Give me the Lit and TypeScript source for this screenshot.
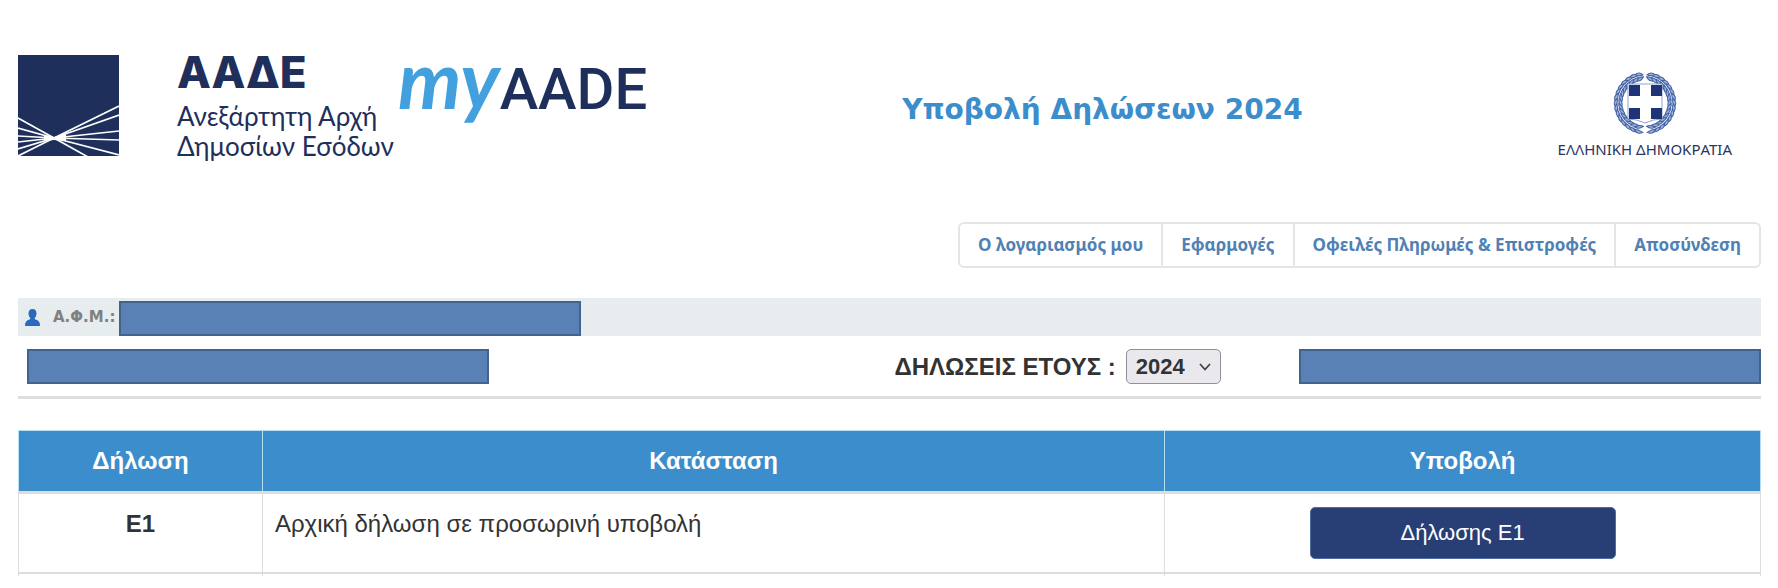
import { LitElement, html, css, svg } from "lit";
import { customElement, state } from "lit/decorators.js";

@customElement("aade-brand")
class AadeBrand extends LitElement {
  static styles = css`
    :host { display: flex; align-items: flex-start; color: #1e2f5c; }
    .mark { display: block; flex: none; }
    .name { margin-left: 58px; width: 221px; white-space: nowrap; }
    .short { font: 800 44px/34px Inter, "Noto Sans", sans-serif; }
    .long { margin-top: 12px; font: 26px/30px Lato, "Noto Sans", sans-serif; }
    .my { display: flex; align-items: baseline; font: 500 58px/46px Roboto, sans-serif; }
    .script { font: italic 700 80px/46px Lato, sans-serif; color: #43a0de; }
  `;

  render() {
    const ends = [[0, 63], [0, 73], [0, 81], [0, 87], [0, 94], [0, 101], [101, 51], [101, 60], [101, 76], [101, 85], [101, 100], [70, 102]];
    return html`
      <svg class="mark" width="101" height="101" viewBox="0 0 101 101" aria-hidden="true">
        <rect width="101" height="101" fill="#1e2f5c" />
        ${ends.map(([x, y]) => svg`<line x1="36" y1="83" x2=${x} y2=${y} stroke="#fff" stroke-width="1.7" />`)}
        <path d="M26 80 L36 82 L48 79 L48 86 L36 85 L26 86Z" fill="#fff" />
      </svg>
      <div class="name">
        <div class="short">ΑΑΔΕ</div>
        <div class="long">Ανεξάρτητη Αρχή<br />Δημοσίων Εσόδων</div>
      </div>
      <div class="my"><span class="script">my</span><span>AADE</span></div>
    `;
  }
}

@customElement("state-emblem")
class StateEmblem extends LitElement {
  static styles = css`
    :host { display: flex; flex-direction: column; align-items: center; color: #27355f; }
    .caption { margin-top: 3px; font: 15px/22px "Noto Sans", sans-serif; white-space: nowrap; }
    svg { display: block; }
  `;

  render() {
    const leaves = Array.from({ length: 15 }, (_, i) => 12 + i * 11);
    const leaf = (a: number, side: number) => svg`
      <g transform="translate(32 32) scale(${side} 1) rotate(${a})">
        <path d="M-4 -28 Q0 -33 5 -29 Q0 -27 -4 -28Z" />
        <path d="M-4 -26 Q1 -27 4 -23 Q-1 -22 -4 -26Z" />
      </g>`;
    return html`
      <svg width="64" height="64" viewBox="0 0 64 64" aria-hidden="true">
        <g fill="#9db2da" stroke="#3f5fa3" stroke-width="1">
          ${leaves.map((a) => leaf(a, 1))}${leaves.map((a) => leaf(a, -1))}
        </g>
        <path d="M15 13H49V48Q40 48 32 52Q24 48 15 48Z" fill="#fff" stroke="#8ea4d0" />
        <path d="M16 14H27V25H16ZM38 14H49V25H38ZM16 37H27V48H16ZM38 37H49V48H38Z" fill="#1f3478" />
      </svg>
      <div class="caption">ΕΛΛΗΝΙΚΗ ΔΗΜΟΚΡΑΤΙΑ</div>
    `;
  }
}

@customElement("app-root")
class AppRoot extends LitElement {
  @state() private year = "2024";

  static styles = css`
    :host { display: block; padding: 55px 17px 12px 18px; background: #fff; color: #333; font-family: "Liberation Sans", Arial, sans-serif; }
    * { box-sizing: border-box; }
    .header { display: grid; grid-template-columns: auto 1fr auto; align-items: start; padding-right: 29px; }
    .title { margin: 37px 0 0; text-align: center; color: #3c8dcb; font: 700 28px/36px "DejaVu Sans", Verdana, sans-serif; }
    state-emblem { margin-top: 16px; }
    .nav { display: flex; width: fit-content; margin: 61px 0 0 auto; border: 2px solid #e5e5e5; border-radius: 6px; }
    .nav a { padding: 0 18px; color: #4f81b5; text-decoration: none; white-space: nowrap; font: 700 17px/42px "Noto Sans", sans-serif; }
    .nav a + a { border-left: 2px solid #e5e5e5; }
    .taxpayer { display: flex; align-items: center; height: 38px; margin-top: 30px; padding-left: 7px; background: #e7ecef; }
    .afm { margin-left: 13px; width: 66px; white-space: nowrap; color: #808080; font: 700 15px/24px "DejaVu Sans", Verdana, sans-serif; }
    .masked { width: 462px; height: 35px; background: #5981b5; border: 2px solid #43638f; }
    .taxpayer .masked { align-self: flex-end; }
    .filter { display: grid; grid-template-columns: 1fr 1fr; align-items: center; padding: 13px 0 12px; border-bottom: 3px solid #dedede; }
    .filter > .masked { margin-left: 9px; }
    .period { display: flex; align-items: center; justify-content: space-between; padding-left: 5px; }
    .period label { font-weight: 700; font-size: 24px; line-height: 35px; white-space: nowrap; }
    .choice { display: flex; align-items: center; gap: 10px; }
    .select { display: grid; align-items: center; }
    .select > * { grid-area: 1 / 1; }
    .select svg { justify-self: end; margin-right: 10px; pointer-events: none; }
    select { appearance: none; width: 95px; height: 35px; margin: 0; padding: 0 0 0 9px; border: 1px solid #8f8f9d; border-radius: 5px; background: #e9e9ed; color: #333; font: 700 22px/32px "Liberation Sans", Arial, sans-serif; }
    table { width: 100%; margin-top: 31px; border-collapse: collapse; table-layout: fixed; }
    .c1 { width: 14%; }
    .c3 { width: 34.2%; }
    th, td { border: 1px solid #ddd; padding: 13px 12px; font-size: 24px; line-height: 34px; }
    thead th { background: #3c8dcb; color: #fff; border-color: #b5e0f2; border-bottom: 3px solid #ddd; }
    tbody th, tbody td { border-bottom: 2px solid #ddd; vertical-align: top; }
    tbody th, .action { text-align: center; }
    .next td { height: 3px; padding: 0; border-bottom: 0; }
    button { display: block; width: 306px; height: 52px; margin: 0 auto; border: 1px solid #4f6da3; border-radius: 5px; background: #273f75; color: #fff; font: 22px/30px "Liberation Sans", Arial, sans-serif; }
  `;

  render() {
    return html`
      <header class="header">
        <aade-brand></aade-brand>
        <h1 class="title">Υποβολή Δηλώσεων 2024</h1>
        <state-emblem></state-emblem>
      </header>
      <nav class="nav">
        ${["Ο λογαριασμός μου", "Εφαρμογές", "Οφειλές Πληρωμές & Επιστροφές", "Αποσύνδεση"].map((t) => html`<a href="#">${t}</a>`)}
      </nav>
      <section class="taxpayer">
        <svg width="15" height="17" viewBox="0 0 15 17" aria-hidden="true">
          <path d="M7.5 0C10.3 0 11.5 2 11.5 4.500C11.5 7 10 8.500 9.500 10L13 11.500Q15 13 15 17H0Q0 13 2 11.500L5.500 10C5 8.500 3.500 7 3.500 4.500C3.500 2 4.700 0 7.500 0Z" fill="#2a69c0" />
        </svg>
        <span class="afm">Α.Φ.Μ.:</span>
        <div class="masked"></div>
      </section>
      <section class="filter">
        <div class="masked"></div>
        <div class="period">
          <div class="choice">
            <label for="year">ΔΗΛΩΣΕΙΣ ΕΤΟΥΣ :</label>
            <div class="select">
              <select id="year" .value=${this.year} @change=${(e: Event) => (this.year = (e.target as HTMLSelectElement).value)}>
                <option value="2024">2024</option>
              </select>
              <svg width="12" height="8" viewBox="0 0 12 8" fill="none" stroke="#444" stroke-width="1.8" aria-hidden="true"><path d="M1 1L6 6.500L11 1" /></svg>
            </div>
          </div>
          <div class="masked"></div>
        </div>
      </section>
      <table>
        <colgroup><col class="c1" /><col /><col class="c3" /></colgroup>
        <thead>
          <tr><th scope="col">Δήλωση</th><th scope="col">Κατάσταση</th><th scope="col">Υποβολή</th></tr>
        </thead>
        <tbody>
          <tr>
            <th scope="row">Ε1</th>
            <td>Αρχική δήλωση σε προσωρινή υποβολή</td>
            <td class="action"><button type="button">Δήλωσης Ε1</button></td>
          </tr>
          <tr class="next" aria-hidden="true"><td></td><td></td><td></td></tr>
        </tbody>
      </table>
    `;
  }
}
